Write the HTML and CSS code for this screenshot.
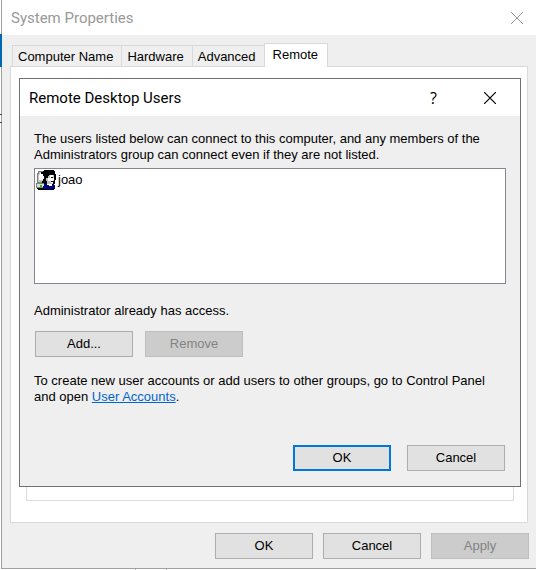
FILE: index.html
```html
<!DOCTYPE html>
<html lang="en">
<head>
<meta charset="utf-8">
<meta name="viewport" content="width=device-width, initial-scale=1">
<title>System Properties</title>
<link rel="stylesheet" href="styles.css">
</head>
<body>
<div class="window">
  <span class="backdrop-selection" aria-hidden="true"></span>
  <span class="backdrop-mark" aria-hidden="true"></span>
  <header class="titlebar titlebar-inactive">
    <h1 class="title">System Properties</h1>
    <button class="caption-button" type="button" aria-label="Close">
      <svg width="12" height="12" viewBox="0 0 12 12" aria-hidden="true"><path d="M0 0L12 12M12 0L0 12" fill="none" stroke="currentColor"/></svg>
    </button>
  </header>
  <div class="window-body">
    <nav class="tabs" role="tablist">
      <button class="tab" role="tab" type="button">Computer Name</button>
      <button class="tab" role="tab" type="button">Hardware</button>
      <button class="tab" role="tab" type="button">Advanced</button>
      <button class="tab tab-selected" role="tab" type="button" aria-selected="true">Remote</button>
    </nav>
    <main class="panel">
      <div class="group"></div>
    </main>
    <footer class="actions">
      <button class="button" type="button">OK</button>
      <button class="button" type="button">Cancel</button>
      <button class="button" type="button" disabled>Apply</button>
    </footer>
  </div>

  <section class="dialog" role="dialog" aria-labelledby="dialog-title">
    <header class="titlebar dialog-titlebar">
      <h2 class="title" id="dialog-title">Remote Desktop Users</h2>
      <button class="caption-button help" type="button" aria-label="Help">?</button>
      <button class="caption-button" type="button" aria-label="Close">
        <svg width="12" height="12" viewBox="0 0 12 12" aria-hidden="true"><path d="M0 0L12 12M12 0L0 12" fill="none" stroke="currentColor" stroke-width="1.2"/></svg>
      </button>
    </header>
    <div class="dialog-body">
      <p class="text">The users listed below can connect to this computer, and any members of the Administrators group can connect even if they are not listed.</p>
      <ul class="user-list">
        <li class="user">
          <svg width="20" height="20" viewBox="0 0 20 20" shape-rendering="crispEdges" aria-hidden="true">
            <path fill="#808080" d="M2 1h8v12H1V3h1z"/>
            <path fill="#c0c0c0" d="M3 2h6v10H2V4h1z"/>
            <path fill="#fff" d="M4 3h4v7H3V5h1z"/>
            <path fill="#808080" d="M0 13h9v6H1v-1H0z"/>
            <path fill="#dcdcdc" d="M1 14h8v3H1z"/>
            <path fill="#000" d="M1 18h17v2H2v-1H1z"/>
            <path fill="#00d000" d="M4 15h2v2H4z"/>
            <path fill="#000" d="M8 0h10v1h1v3h1v6h-1v4H8v-1H6v-2h1V9h1V6H7V4H5V2h2V1h1z"/>
            <path fill="#c0c0c0" d="M13 5h5v6h-1v3h-6v-3h-1V8h2V6h1z"/>
            <path fill="#fff" d="M14 5h3v3h1v2h-1v3h-2v-2h-3V8h2z"/>
            <path fill="#000" d="M15 7h2v1h-2zM15 11h2v1h-2z"/>
            <path fill="#000080" d="M8 14h3v1h2v1h3v-2h2v1h1v4H8v-1H7v-2h1z"/>
            <path fill="#fff" d="M13 14h3v1h-1v1h-2z"/>
          </svg>
          <span>joao</span>
        </li>
      </ul>
      <p class="text access">Administrator already has access.</p>
      <div class="list-actions">
        <button class="button" type="button">Add...</button>
        <button class="button" type="button" disabled>Remove</button>
      </div>
      <p class="text">To create new user accounts or add users to other groups, go to Control Panel and open <a class="link" href="#">User Accounts</a>.</p>
      <div class="dialog-actions">
        <button class="button button-default" type="button">OK</button>
        <button class="button" type="button">Cancel</button>
      </div>
    </div>
  </section>
</div>
<div class="backdrop-edge" aria-hidden="true"></div>
</body>
</html>
```
FILE: styles.css
```css
* { box-sizing: border-box; }

body {
  margin: 0;
  min-height: 100vh;
  display: flex;
  flex-direction: column;
  background: #fff;
  color: #000;
  font: 13px/16px "Liberation Sans", Arial, sans-serif;
}

button { font: inherit; color: inherit; }
h1, h2, p, ul { margin: 0; padding: 0; }

.window {
  position: relative;
  flex: 1;
  display: flex;
  flex-direction: column;
  margin-left: 1px;
  border: solid #a0a0a0;
  border-width: 0 0 1px 1px;
  background: #efefef;
}

.titlebar {
  display: flex;
  align-items: center;
  height: 35px;
  padding: 0 13px 0 9px;
  background: #fff;
}

.titlebar-inactive { color: #999; }

.title {
  flex: 1;
  font: 15px/20px Roboto, "Segoe UI", sans-serif;
}

.caption-button {
  display: flex;
  padding: 0;
  border: 0;
  background: none;
}

.window-body {
  flex: 1;
  display: flex;
  flex-direction: column;
  padding: 8px 8px 0;
}

.tabs {
  z-index: 1;
  display: flex;
  align-items: flex-end;
  padding-left: 2px;
}

.tab {
  height: 22px;
  padding: 1px 8px 0 5px;
  border: 1px solid #d9d9d9;
  border-right-width: 0;
  background: #efefef;
  white-space: nowrap;
}

.tab-selected {
  height: 24px;
  padding: 0 9px 2px 8px;
  border-right-width: 1px;
  border-bottom-width: 0;
  background: #fff;
}

.panel {
  flex: 1;
  display: flex;
  margin-top: -1px;
  padding: 15px 13px 21px 15px;
  border: 1px solid #d9d9d9;
  background: #fff;
}

.group { flex: 1; border: 1px solid #dcdcdc; }

.actions, .dialog-actions, .list-actions { display: flex; }

.actions {
  justify-content: flex-end;
  gap: 10px;
  margin-right: -1px;
  padding: 10px 0 9px;
}

.button {
  width: 98px;
  height: 26px;
  padding: 0;
  border: 1px solid #adadad;
  background: #e1e1e1;
}

.button:disabled {
  border-color: #bfbfbf;
  background: #ccc;
  color: #838383;
}

.button-default { border: 2px solid #0078d7; }

.dialog {
  position: absolute;
  top: 78px;
  left: 17px;
  right: 15px;
  border: 1px solid #707070;
  background: #efefef;
}

.dialog-titlebar { height: 37px; padding: 0 24px 0 9px; }
.help { margin-right: 47px; font: 16px/20px "Open Sans", sans-serif; }

.dialog-body { padding: 15px 14px; }

.user-list {
  height: 116px;
  margin: 5px 0 19px;
  padding: 1px;
  border: 1px solid #828790;
  background: #fff;
  list-style: none;
}

.user { display: flex; align-items: center; gap: 2px; }
.list-actions { gap: 12px; margin: 12px 1px 16px; }
.link { color: #0066cc; }
.dialog-actions { justify-content: flex-end; gap: 16px; margin: 40px 1px 0 0; }

.backdrop-selection, .backdrop-mark { position: absolute; left: -2px; width: 2px; }
.backdrop-selection { top: 34px; height: 33px; background: #0067b5; }
.backdrop-mark { top: 114px; height: 9px; border: solid #444; border-width: 1px 0; }

.backdrop-edge {
  width: 32px;
  height: 1px;
  margin-left: 135px;
  border: solid #aaa;
  border-width: 0 1px;
}
```
